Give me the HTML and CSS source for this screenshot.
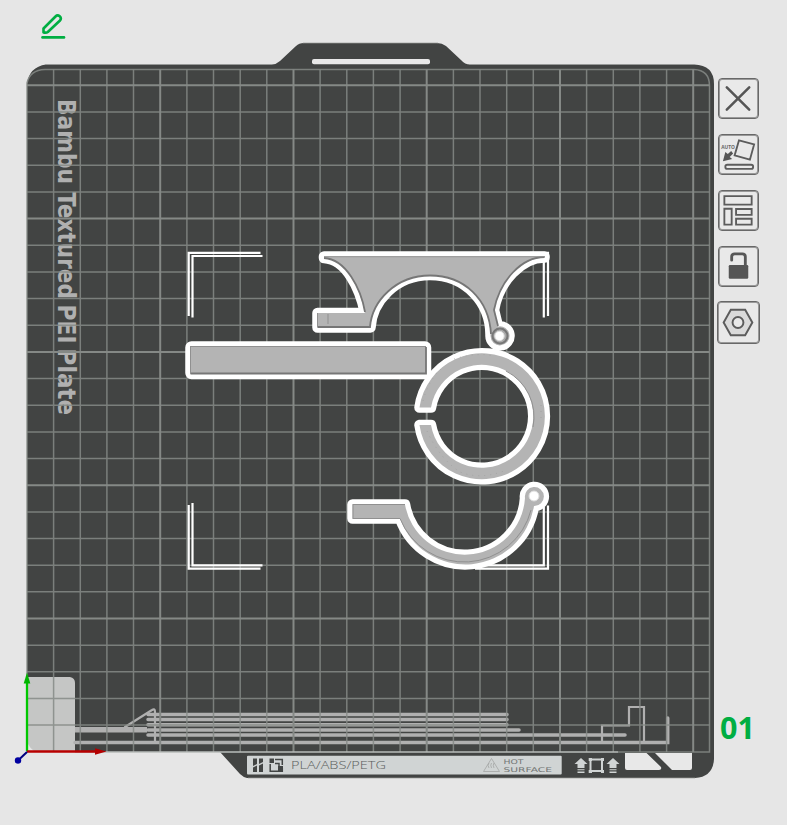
FILE: index.html
```html
<!DOCTYPE html>
<html lang="en">
<head>
<meta charset="utf-8">
<title>Build plate</title>
<link rel="stylesheet" href="styles.css">
</head>
<body>
<main class="viewport">
  <svg class="scene" viewBox="0 0 787 825" width="787" height="825">
    <defs>
      <clipPath id="bed"><path d="M27 752V84Q29 71 45 69.500H694Q709.500 70 709.500 86V752Z"/></clipPath>
      <path id="clamp" d="M324 256.500H544.500V257.500C522 257.500 499 281 494 310L498 326.600A9.500 9.500 0 1 1 490.500 336C491 302 465 275 430 275S372 302 370.500 327.500H317.500V313H365C360 288 346 259 324 258Z"/>
      <path id="ring" d="M419.500 407.500A63 63 0 1 1 419.500 425H431A51.500 51.500 0 1 0 431 407.500Z"/>
      <path id="hook" d="M352.500 504.500H405A60.500 60.500 0 0 0 525 498A9.500 9.500 0 1 1 534 506A69.500 69.500 0 0 1 400 518.500H352.500Z"/>
      <rect id="bar" x="190.500" y="346.500" width="235.500" height="27.500" rx="1"/>
      <path id="arrow" d="M581 758L587.500 764H584.500V768H577.500V764H574.500ZM577.500 769.200H584.500V770.200H577.500ZM577.500 771.500H584.500V773H577.500Z"/>
    </defs>

    <!-- plate body -->
    <path class="plate" d="M27 752V84Q29 67 46 64.500H272Q276 64.500 280 61L296 46Q299 43 304 43H437Q442 43 446 46L461 60Q465 64.500 470 64.500H694Q714 65 714 84V759Q713 777 695 778H247Q243 777 240 774L220 752Z"/>
    <path class="rim" d="M45 64.500H272M303 43H438M469 64.500H694M248 778H695"/>
    <rect class="slot" x="312" y="59" width="118" height="5.300" rx="2"/>

    <g class="plate-name" transform="translate(57.500 100) rotate(90)">
      <text x="-1" textLength="85" lengthAdjust="spacingAndGlyphs">Bambu</text>
      <text x="92" textLength="107" lengthAdjust="spacingAndGlyphs">Textured</text>
      <text x="204.500" textLength="39" lengthAdjust="spacingAndGlyphs">PEI</text>
      <text x="248.500" textLength="66.500" lengthAdjust="spacingAndGlyphs">Plate</text>
    </g>

    <!-- wipe area and purge lines -->
    <path class="pad" d="M28 677H70Q75 678 75 683V751H28Z"/>
    <g class="tracks">
      <path d="M148 714.400H507M148 719.500H507M148 724.700H507M148 730H519M148 735H625M75 742.400H667.700V718"/>
      <path class="wide" d="M75 729.700H147"/>
      <path class="fine" d="M125 727L152 710Q155 708 155 712V741M602 742V725.500H629V707H644V742"/>
    </g>

    <!-- grid -->
    <g clip-path="url(#bed)">
      <path class="grid" d="M53.600 69V752M80.300 69V752M106.900 69V752M133.500 69V752M186.900 69V752M213.500 69V752M240.200 69V752M266.800 69V752M320.100 69V752M346.800 69V752M373.400 69V752M400.100 69V752M453.400 69V752M480 69V752M506.700 69V752M533.300 69V752M586.600 69V752M613.300 69V752M639.900 69V752M666.600 69V752M27 725.100H710M27 698.500H710M27 671.800H710M27 645.200H710M27 591.800H710M27 565.200H710M27 538.500H710M27 511.900H710M27 458.500H710M27 431.900H710M27 405.200H710M27 378.500H710M27 325.200H710M27 298.500H710M27 271.900H710M27 245.200H710M27 191.900H710M27 165.200H710M27 138.600H710M27 111.900H710"/>
      <path class="grid major" d="M160.200 69V752M293.500 69V752M426.700 69V752M560 69V752M693.200 69V752M27 618.500H710M27 485.200H710M27 351.900H710M27 218.500H710M27 85.300H710"/>
    </g>
    <path class="grid edge" d="M27 752V83Q30 70 45 69.500H694Q709.500 70 709.500 86V752H618"/>
    <path class="base-line" d="M75 752H618"/>

    <!-- selection corners -->
    <path class="corners" d="M188.700 316V252.800H260.500M192.500 317.500V256H262.500M548 316V252.800H530M543.800 317.500V256H530M188.700 505V568.700H260.500M192.500 503V565.300H262.500M548 505.500V568.700H475M543.800 507V565.300H480"/>

    <!-- models -->
    <g class="halo"><use href="#bar"/><use href="#ring"/><use href="#clamp"/><use href="#hook"/></g>
    <g class="solid"><use href="#bar"/><use href="#ring"/><use href="#clamp"/><use href="#hook"/></g>
    <g class="shade">
      <path d="M190.500 373.500H426V347"/>
      <path d="M317.500 327H370C372 301 396 275.500 430 275.500S489 299 491 334M324 258C346 259 361 289 365 312M544.500 257C522 257 500 280 494 310L498 326"/>
      <path class="thin" d="M317.500 327V313M353 504.500H405M353 518.500H400A69 69 0 0 0 531 510M353 504V519M190.500 346.500H426M190.500 346V374M324 256.700H545M328 314V324"/>
      <path class="thin" d="M506 371A51.500 51.500 0 0 1 533 427"/>
    </g>
    <path class="facets" d="M423 401Q428 381 441 369M454 359Q476 352 493 356M541 405V423M427 431Q440 459 460 472Q480 480 504 471"/>
    <circle class="boss" cx="500" cy="336" r="7.500"/>
    <circle class="hole" cx="499.500" cy="336" r="4.700"/>
    <circle class="hole" cx="534" cy="496" r="5"/>

    <!-- plate label -->
    <rect class="label" x="247" y="755.800" width="314.700" height="18.700" rx="1"/>
    <path class="ink" d="M253 758.500H257V764L253 766ZM259 758.500H263V762L259 764ZM253 767.500L257 765.500V772H253ZM259 765.500L263 763.500V772H259Z"/>
    <path class="ink-line" d="M275 759.500H282.300V765M270.200 764V771.300H282.300V768M275 763.500H279V767"/>
    <path class="ink" d="M269.500 758.500H274V763H269.500ZM278 766H283V772H278Z"/>
    <text class="label-text" x="291" y="769" textLength="95" lengthAdjust="spacingAndGlyphs">PLA/ABS/PETG</text>
    <path class="warning" d="M491.500 758.500L499.500 771.500H483.500ZM489 768Q487 765 489 763M491.500 768Q490 765 491.500 763M494 768Q492.500 765 494 763"/>
    <text class="label-small" x="503.500" y="764.300" textLength="20" lengthAdjust="spacingAndGlyphs">HOT</text>
    <text class="label-small" x="503.500" y="772" textLength="48.500" lengthAdjust="spacingAndGlyphs">SURFACE</text>
    <use class="mark" href="#arrow"/>
    <use class="mark" href="#arrow" x="32"/>
    <rect class="mark-line" x="590.500" y="759.500" width="11.500" height="11.500"/>
    <path class="mark" d="M588.700 758H592V761H588.700ZM601 758H604V761H601ZM588.700 770H592V773H588.700ZM601 770H604V773H601Z"/>
    <path class="window" d="M625 753H646.500L661 767Q662 770 659 770H627Q625 770 625 768ZM655 753H692V768Q692 770 690 770H672Z"/>

    <!-- axes -->
    <path class="origin" d="M28 744Q30 748 34 751H28Z"/>
    <path class="axis-y" d="M27 751V682"/><path class="tip-y" d="M27 672.500L30.300 683.500H23.700Z"/>
    <path class="axis-x" d="M27 751.500H97"/><path class="tip-x" d="M106.500 751.500L95 748.300V754.700Z"/>
    <path class="axis-z" d="M27 752L18 760.500"/><circle class="tip-z" cx="18" cy="760.500" r="3.200"/>
  </svg>

  <svg class="edit" viewBox="0 0 26 28" width="26" height="28">
    <path d="M3.500 19.500V15.500L15.500 3.500Q17.500 1.500 19.700 3.300Q21.800 5.200 20 7.500L7.800 19Q6.500 20 3.500 19.500Z"/>
    <path d="M2.500 24.400H24"/>
  </svg>

  <nav class="tools">
    <button class="tool" aria-label="Delete"><svg viewBox="0 0 40 40"><path class="cross" d="M8 8.500L31 31.500M31 8.500L8 31.500"/></svg></button>
    <button class="tool" aria-label="Auto orient"><svg viewBox="0 0 40 40"><path class="line" d="M20.500 5.500L36 9.700L31.700 25.300L16 21Z"/><rect class="line" x="6.500" y="30.500" width="28.500" height="4.200" rx="2"/><text class="auto" x="2.300" y="14.500" textLength="14" lengthAdjust="spacingAndGlyphs">AUTO</text><path class="fill" d="M12.500 16.500L9 19.500L6.500 17.500L4 27L13.500 24.500L11 22.500L14.500 19Z"/></svg></button>
    <button class="tool" aria-label="Arrange"><svg viewBox="0 0 40 40"><path class="line" d="M5.500 5.200H33.500V14H5.500ZM5.500 18.200H13V34.500H5.500ZM17.500 18.500H33.500V24.500H17.500ZM17.500 28.500H33.500V34.500H17.500Z"/></svg></button>
    <button class="tool" aria-label="Lock"><svg viewBox="0 0 40 40"><rect class="fill" x="10" y="18.500" width="20" height="14" rx="1.300"/><path class="shackle" d="M27 19V10Q27 7 24 7H16Q13 7 13 10V13.500"/></svg></button>
    <button class="tool tool-large" aria-label="Plate settings"><svg viewBox="0 0 40 40"><path class="line nut" d="M12.500 7.500H26.500L33.500 20L26.500 32.500H12.500L5.500 20Z"/><circle class="line nut-hole" cx="19.500" cy="20" r="5.300"/></svg></button>
  </nav>

  <div class="plate-number">01</div>
</main>
</body>
</html>
```
FILE: styles.css
```css
body {
  margin: 0;
  background: #e6e6e6;
  font-family: "Open Sans", sans-serif;
}
.viewport {
  position: relative;
  width: 787px;
  height: 825px;
  overflow: hidden;
}
.scene { display: block; }
.scene path { fill: none; }
.scene .plate { fill: #424443; }
.rim { stroke: #989b99; stroke-width: .7; }
.slot, .scene .window { fill: #e8e8e8; }
.plate-name {
  font: 700 25px "DejaVu Sans", sans-serif;
  fill: #b0b0b0;
}
.scene .pad { fill: #c5c6c5; }
.tracks { stroke: #b0b0b0; stroke-width: 3.500; stroke-linecap: round; }
.tracks .wide { stroke-width: 5.500; stroke-linecap: butt; }
.tracks .fine { stroke-width: 2.200; }
.grid { stroke: #858986; stroke-opacity: .85; stroke-width: 1.500; }
.grid.major { stroke-width: 2; stroke-opacity: 1; }
.grid.edge { stroke-width: 1.500; }
.base-line { stroke: #b9bcba; stroke-width: 1.500; }
.corners { stroke: #fff; stroke-width: 2.200; }
.halo { stroke: #fff; stroke-width: 10.500; stroke-linejoin: round; }
.scene defs path { fill: inherit; }
.solid { fill: #b4b4b4; }
.shade { stroke: #767676; stroke-width: 1.800; }
.shade .thin { stroke: #909090; stroke-width: 1; }
.facets { stroke: #989898; stroke-width: .6; stroke-dasharray: 1 5; }
.boss { fill: #aaa; stroke: #777; stroke-width: 2; }
.hole { fill: #fff; stroke: #ddd; stroke-width: 1; }
.label { fill: #d0d4d4; }
.scene .ink { fill: #424544; }
.ink-line { stroke: #424544; stroke-width: 1.500; }
.label-text { font: 300 11px "Open Sans", sans-serif; fill: #5a5d5c; }
.label-small { font: 400 6.500px "DejaVu Sans", sans-serif; fill: #737675; }
.warning { stroke: #a3a6a5; stroke-width: .8; }
.mark, .scene .mark { fill: #d0d4d4; }
.mark-line { fill: none; stroke: #d0d4d4; stroke-width: 2; }
.scene .origin { fill: #e6e6e6; }
.axis-x { stroke: #b80000; stroke-width: 2.300; }
.axis-y { stroke: #00c800; stroke-width: 2.300; }
.axis-z { stroke: #000080; stroke-width: 2; }
.scene .tip-x { fill: #b40000; }
.scene .tip-y { fill: #00b400; }
.tip-z { fill: #0000a0; }

.edit {
  position: absolute;
  left: 40px;
  top: 13px;
  fill: none;
  stroke: #00ae42;
  stroke-width: 2.600;
  stroke-linecap: round;
  stroke-linejoin: round;
}

.tools {
  position: absolute;
  left: 717px;
  top: 78px;
  display: flex;
  flex-direction: column;
  align-items: center;
  gap: 15px;
}
.tool {
  box-sizing: border-box;
  width: 41px;
  height: 41px;
  padding: 0;
  border: 1px solid #686868;
  border-radius: 4px;
  background: #e9e9e9;
  box-shadow: inset 0 0 0 1px #999;
}
.tool-large { width: 43px; height: 43px; margin-top: -1px; }
.tool svg { display: block; width: 100%; height: 100%; overflow: visible; }
.line { fill: none; stroke: #5c5c5c; stroke-width: 1.900; }
.fill { fill: #555; }
.cross { stroke: #555; stroke-width: 2.600; stroke-linecap: round; }
.shackle { fill: none; stroke: #575757; stroke-width: 2.900; stroke-linecap: round; }
.auto { font: 700 5.500px "Open Sans", sans-serif; fill: #666; }
.line.nut { fill: #dadada; }
.line.nut-hole { fill: #e9e9e9; }

.plate-number {
  position: absolute;
  left: 720px;
  top: 707px;
  font-size: 30.500px;
  line-height: 41px;
  font-weight: 700;
  color: #00ae42;
}
```
